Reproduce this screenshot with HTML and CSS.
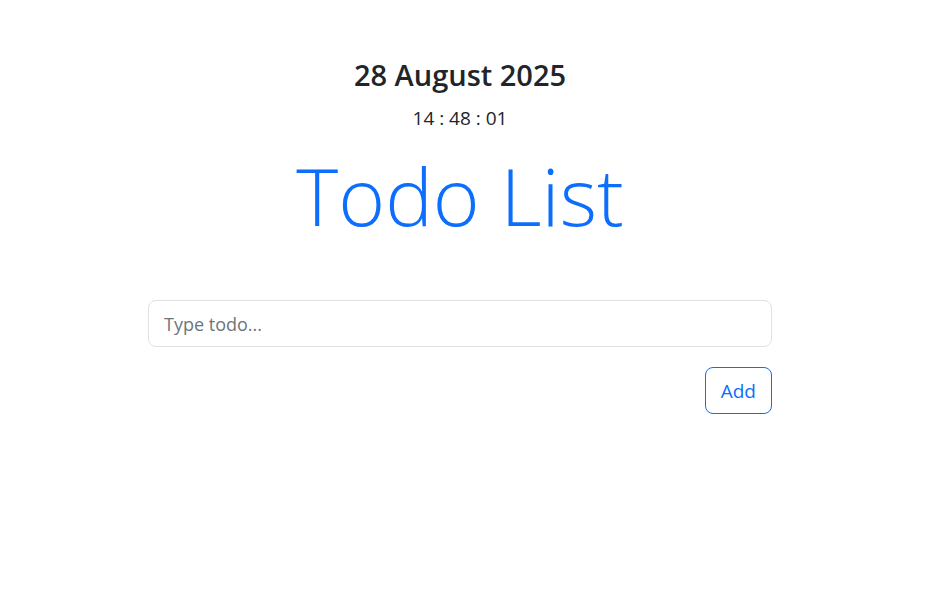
FILE: index.html
```html
<!DOCTYPE html>
<html lang="en">
<head>
<meta charset="utf-8">
<title>Todo List</title>
<link rel="stylesheet" href="styles.css">
</head>
<body>
<main class="page">
  <header class="clock">
    <h3 class="date">28 August 2025</h3>
    <p class="time">14 : 48 : 01</p>
  </header>
  <h1 class="title">Todo List</h1>
  <form class="todo-form">
    <input class="todo-input" type="text" placeholder="Type todo...">
    <div class="actions">
      <button class="btn-add" type="button">Add</button>
    </div>
  </form>
</main>
</body>
</html>
```
FILE: styles.css
```css
* { box-sizing: border-box; }
html, body { margin: 0; padding: 0; background: #fff; }
body {
  font-family: "Open Sans", "Noto Sans", sans-serif;
  color: #212529;
  width: 920px;
}
.page {
  display: flex;
  flex-direction: column;
  align-items: center;
  padding-top: 57px;
}
.clock { text-align: center; }
.date {
  margin: 0;
  font-size: 29px;
  font-weight: 600;
  line-height: 36px;
}
.time {
  margin: 13px 0 0;
  font-size: 19px;
  line-height: 24px;
}
.title {
  margin: 17px 0 0;
  font-size: 80px;
  font-weight: 300;
  line-height: 96px;
  color: #0d6efd;
}
.todo-form {
  width: 624px;
  margin-top: 57px;
  display: flex;
  flex-direction: column;
  gap: 20px;
}
.todo-input {
  width: 100%;
  height: 47px;
  padding: 8px 15px;
  font-family: inherit;
  font-size: 18px;
  color: #212529;
  border: 1px solid #dee2e6;
  border-radius: 8px;
  outline: none;
}
.todo-input::placeholder { color: #6c757d; }
.actions { display: flex; justify-content: flex-end; }
.btn-add {
  height: 47px;
  padding: 0 15px;
  font-family: inherit;
  font-size: 19px;
  color: #0d6efd;
  background: #fff;
  border: 1px solid #0d6efd;
  border-radius: 8px;
}
```
